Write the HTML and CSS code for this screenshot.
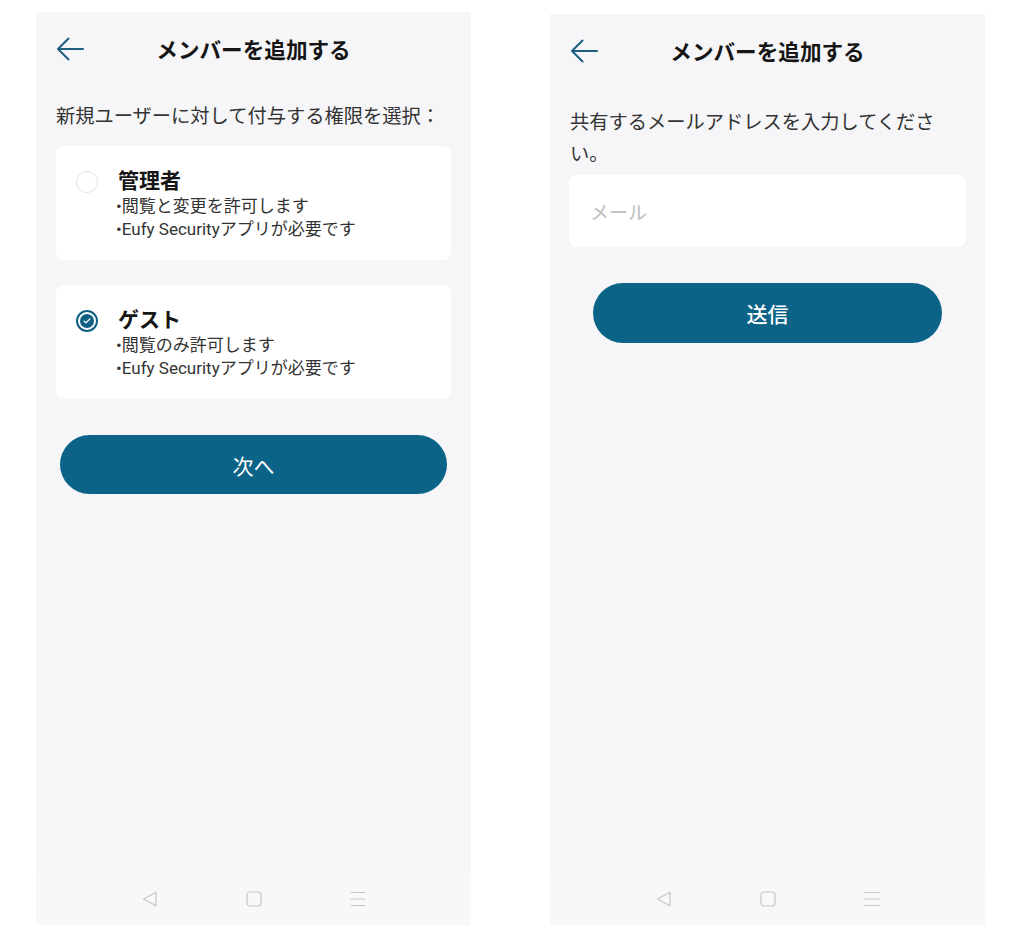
FILE: index.html
```html
<!DOCTYPE html>
<html lang="ja">
<head>
<meta charset="utf-8">
<title>メンバーを追加する</title>
<link rel="stylesheet" href="styles.css">
</head>
<body>
<div class="stage">
  <section class="screen screen--left">
    <header class="appbar">
      <svg class="back" width="28" height="24" viewBox="0 0 28 24"><path d="M27 12H2M12.5 1.5L2 12l10.5 10.5" fill="none" stroke="#1d5e80" stroke-width="2" stroke-linecap="round" stroke-linejoin="round"/></svg>
      <h1 class="appbar__title">メンバーを追加する</h1>
    </header>
    <main class="content">
      <p class="lead">新規ユーザーに対して付与する権限を選択：</p>
      <div class="option">
        <span class="radio"></span>
        <div class="option__title">管理者</div>
        <div class="option__desc">•閲覧と変更を許可します<br>•Eufy Securityアプリが必要です</div>
      </div>
      <div class="option">
        <span class="radio radio--on"><svg width="8" height="8" viewBox="0 0 8 8"><path d="M1.2 4.2l1.8 1.7L6.8 2" fill="none" stroke="#fff" stroke-width="1.3" stroke-linecap="round" stroke-linejoin="round"/></svg></span>
        <div class="option__title">ゲスト</div>
        <div class="option__desc">•閲覧のみ許可します<br>•Eufy Securityアプリが必要です</div>
      </div>
      <button class="btn btn--next">次へ</button>
    </main>
    <nav class="navbar">
      <svg width="16" height="16" viewBox="0 0 16 16"><path d="M1.5 8L14 1.2v13.6z" fill="none" stroke="#c6c6c6" stroke-width="1.2" stroke-linejoin="round"/></svg>
      <svg width="16" height="16" viewBox="0 0 16 16"><rect x="1" y="1" width="14" height="14" rx="3" fill="none" stroke="#c6c6c6" stroke-width="1.2"/></svg>
      <svg width="16" height="16" viewBox="0 0 16 16"><path d="M0.5 1.5h15M0.5 8h15M0.5 14.5h15" fill="none" stroke="#c6c6c6" stroke-width="1.1"/></svg>
    </nav>
  </section>

  <section class="screen screen--right">
    <header class="appbar">
      <svg class="back" width="28" height="24" viewBox="0 0 28 24"><path d="M27 12H2M12.5 1.5L2 12l10.5 10.5" fill="none" stroke="#1d5e80" stroke-width="2" stroke-linecap="round" stroke-linejoin="round"/></svg>
      <h1 class="appbar__title">メンバーを追加する</h1>
    </header>
    <main class="content">
      <p class="lead lead--email">共有するメールアドレスを入力してください。</p>
      <div class="field"><span class="field__placeholder">メール</span></div>
      <button class="btn btn--send">送信</button>
    </main>
    <nav class="navbar">
      <svg width="16" height="16" viewBox="0 0 16 16"><path d="M1.5 8L14 1.2v13.6z" fill="none" stroke="#c6c6c6" stroke-width="1.2" stroke-linejoin="round"/></svg>
      <svg width="16" height="16" viewBox="0 0 16 16"><rect x="1" y="1" width="14" height="14" rx="3" fill="none" stroke="#c6c6c6" stroke-width="1.2"/></svg>
      <svg width="16" height="16" viewBox="0 0 16 16"><path d="M0.5 1.5h15M0.5 8h15M0.5 14.5h15" fill="none" stroke="#c6c6c6" stroke-width="1.1"/></svg>
    </nav>
  </section>
</div>
</body>
</html>
```

FILE: styles.css
```css
* { box-sizing: border-box; }

html, body {
  margin: 0;
  padding: 0;
  background: #ffffff;
  font-family: Roboto, "Noto Sans CJK JP", sans-serif;
  color: #333333;
}

.stage {
  display: flex;
  align-items: flex-start;
  gap: 79px;
  padding: 12px 0 0 36px;
}

.screen {
  width: 435px;
  height: 913px;
  background: #f6f6f8;
  display: flex;
  flex-direction: column;
}

.screen--right {
  margin-top: 2px;
  height: 911px;
}

.appbar {
  height: 74px;
  display: grid;
  grid-template-columns: 1fr auto 1fr;
  align-items: center;
  padding: 0 20px;
}

.back {
  display: block;
  justify-self: start;
}

.appbar__title {
  margin: 0;
  grid-column: 2;
  font-family: "Noto Sans CJK JP", sans-serif;
  font-size: 21.6px;
  font-weight: 700;
  color: #151515;
  line-height: 26px;
}

.content {
  flex: 1;
  padding: 0 20px;
  display: flex;
  flex-direction: column;
}

.lead {
  margin: 16px 0 18px;
  font-family: "Noto Sans CJK JP", sans-serif;
  font-size: 19.25px;
  line-height: 26px;
  color: #333333;
}

.lead--email {
  margin: 17px 0 6px;
  line-height: 32px;
  max-width: 374px;
}

.option {
  background: #ffffff;
  border-radius: 8px;
  padding: 20px 20px 19px;
  display: grid;
  grid-template-columns: 22px 1fr;
  column-gap: 20px;
  margin-bottom: 25px;
}

.radio {
  grid-row: 1;
  grid-column: 1;
  align-self: center;
  width: 22px;
  height: 22px;
  margin-top: 5px;
  border-radius: 50%;
  border: 1.5px solid #e4e4e6;
  display: flex;
  align-items: center;
  justify-content: center;
}

.radio--on {
  border: 2px solid #0f5f82;
  background: #ffffff;
  position: relative;
}

.radio--on::before {
  content: "";
  position: absolute;
  inset: 2px;
  border-radius: 50%;
  background: #0f5f82;
}

.radio--on svg {
  position: relative;
  display: block;
}

.option__title {
  grid-column: 2;
  grid-row: 1;
  font-family: "Noto Sans CJK JP", sans-serif;
  font-size: 21px;
  font-weight: 700;
  line-height: 26px;
  color: #151515;
}

.option__desc {
  grid-column: 2;
  grid-row: 2;
  font-size: 17px;
  line-height: 23px;
  color: #333333;
  padding-top: 2px;
  margin-left: -2px;
}

.btn {
  display: block;
  border: 0;
  border-radius: 30px;
  background: #0b6388;
  color: #ffffff;
  font-family: "Noto Sans CJK JP", sans-serif;
  font-size: 21px;
  line-height: 28px;
  height: 59px;
  cursor: pointer;
}

.btn--next {
  margin: 11px 4px 0;
  font-weight: 400;
}

.btn--send {
  margin: 36px 23px 0;
  font-weight: 500;
  height: 60px;
}

.field {
  height: 72px;
  background: #ffffff;
  border-radius: 8px;
  margin: 0 -1px;
  padding: 0 21px;
  display: flex;
  align-items: center;
}

.field__placeholder {
  font-family: "Noto Sans CJK JP", sans-serif;
  font-size: 19px;
  color: #bdbdbd;
}

.navbar {
  height: 53px;
  background: #f8f8f9;
  display: flex;
  align-items: center;
  justify-content: center;
  gap: 88px;
}

.navbar svg {
  display: block;
}
```
